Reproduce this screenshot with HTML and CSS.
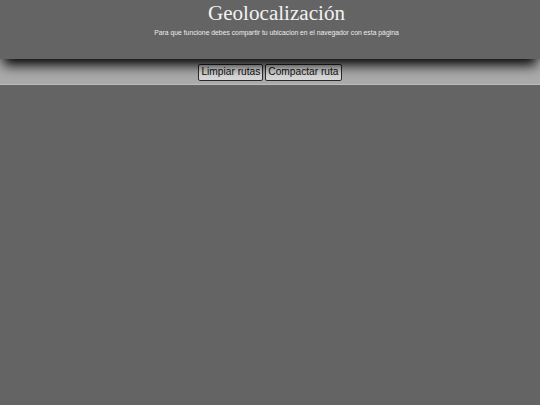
FILE: index.html
```html
<!DOCTYPE html>
<html lang="es">
<head>
<meta charset="utf-8">
<title>Geolocalización</title>
<link rel="stylesheet" href="styles.css">
</head>
<body>
<header class="header">
  <h1 class="title">Geolocalización</h1>
  <p class="subtitle">Para que funcione debes compartir tu ubicacion en el navegador con esta página</p>
</header>
<div class="toolbar">
  <button class="btn" type="button">Limpiar rutas</button>
  <button class="btn" type="button">Compactar ruta</button>
</div>
<main class="map"></main>
</body>
</html>
```
FILE: styles.css
```css
html, body {
  margin: 0;
  padding: 0;
  height: 100%;
  background: #646464;
}
body {
  display: flex;
  flex-direction: column;
}
.header {
  position: relative;
  z-index: 1;
  height: 59px;
  box-sizing: border-box;
  padding-left: 13px;
  background: #646464;
  text-align: center;
  box-shadow: 0 9px 12px -3px #000;
}
.title {
  margin: 0;
  padding-top: 1px;
  font-family: "Liberation Serif", serif;
  font-weight: normal;
  font-size: 21.1px;
  line-height: 24px;
  color: #f2f2f2;
}
.subtitle {
  margin: 4px 0 0;
  font-family: "Liberation Sans", sans-serif;
  font-size: 6.8px;
  color: #ececec;
}
.toolbar {
  height: 24px;
  background: #ababab;
  border-bottom: 1px solid #bcbcbc;
  display: flex;
  justify-content: center;
  align-items: center;
  gap: 2px;
  padding-top: 1px;
}
.btn {
  font-family: "Liberation Sans", sans-serif;
  font-size: 10.2px;
  color: #111;
  background: #d8d8d8;
  border: 1px solid #2a2a2a;
  border-radius: 2px;
  padding: 0 2px;
  height: 17px;
  line-height: 14px;
}
.map {
  flex: 1;
  background: #646464;
}
```
